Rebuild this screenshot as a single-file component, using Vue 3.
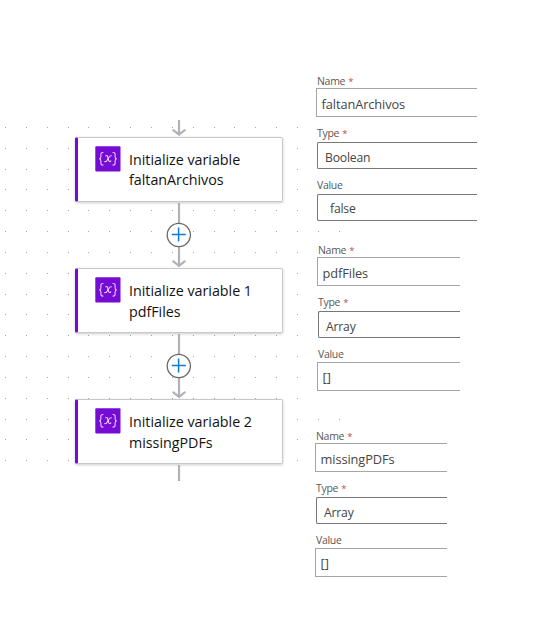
<script setup>
const steps = [
  { title: 'Initialize variable', name: 'faltanArchivos' },
  { title: 'Initialize variable 1', name: 'pdfFiles' },
  { title: 'Initialize variable 2', name: 'missingPDFs' },
]

const forms = [
  {
    id: 'first',
    fields: [
      { label: 'Name', required: true, value: 'faltanArchivos', kind: 'text' },
      { label: 'Type', required: true, value: 'Boolean', kind: 'select' },
      { label: 'Value', required: false, value: 'false', kind: 'select inset' },
    ],
  },
  {
    id: 'second',
    fields: [
      { label: 'Name', required: true, value: 'pdfFiles', kind: 'text' },
      { label: 'Type', required: true, value: 'Array', kind: 'select' },
      { label: 'Value', required: false, value: '[]', kind: 'text low' },
    ],
  },
  {
    id: 'third',
    fields: [
      { label: 'Name', required: true, value: 'missingPDFs', kind: 'text' },
      { label: 'Type', required: true, value: 'Array', kind: 'select' },
      { label: 'Value', required: false, value: '[]', kind: 'text low' },
    ],
  },
]

// Canvas grid dots, plus the few that show between the forms
const dots = []
for (let row = 0; row < 17; row++) {
  for (let col = 0; col < 15; col++) {
    dots.push({ x: Math.round(5 + col * 20.86), y: Math.round(127 + row * 20.83) })
  }
}
for (const y of [231, 419]) {
  dots.push({ x: 318, y }, { x: 339, y })
}
</script>

<template>
  <main class="page">
    <svg class="grid" width="556" height="627" aria-hidden="true">
      <rect v-for="(d, i) in dots" :key="i" :x="d.x" :y="d.y" width="1" height="1" />
    </svg>

    <section class="flow">
      <svg class="lead" width="16" height="17" viewBox="0 0 16 17">
        <path class="line" d="M8 0V14" />
        <path class="head" d="M2.3 10.2L8 14.6L13.7 10.2" />
      </svg>
      <template v-for="(s, i) in steps" :key="s.name">
        <article class="card">
          <svg class="icon" width="26" height="26" viewBox="0 0 26 26">
            <rect x=".3" y=".3" width="25.2" height="25.2" rx="1" fill="#770bd6" />
            <g fill="none" stroke="#e9d3fa" stroke-width="1.05" stroke-linecap="round">
              <path d="M8 6.4C6.2 6.4 5.9 7 5.9 8.3V10.7C5.9 12 5.5 12.7 4.2 12.8C5.5 12.9 5.9 13.6 5.9 14.9V17.2C5.9 18.6 6.2 19.1 8 19.1" />
              <path d="M18 6.4C19.8 6.4 20.1 7 20.1 8.3V10.7C20.1 12 20.5 12.7 21.8 12.8C20.5 12.9 20.1 13.6 20.1 14.9V17.2C20.1 18.6 19.8 19.1 18 19.1" />
              <path d="M10.7 9.8C12 9.1 12.4 9.9 12.7 11L13.7 14.5C14 15.8 14.8 16 15.8 14.9" />
              <path d="M16.3 9.8C15 9.2 14.3 10.5 13.2 12.4C12.1 14.4 11.1 16.3 9.7 15.5" />
            </g>
          </svg>
          <h2 class="title">{{ s.title }}<br />{{ s.name }}</h2>
        </article>
        <svg v-if="i < 2" class="link" width="26" height="67" viewBox="0 0 26 67">
          <path class="line" d="M13 1V63" />
          <path class="head" d="M7.3 59.4L13 63.8L18.7 59.4" />
          <circle cx="12.8" cy="33" r="11.6" fill="#fff" stroke="#696969" stroke-width="1.3" />
          <path d="M12.6 25.5V39.5M5.8 32.5H19.8" stroke="#0b7bd6" stroke-width="1.5" />
        </svg>
      </template>
      <svg class="tail" width="16" height="17" viewBox="0 0 16 17">
        <path class="line" d="M8 1V17" />
      </svg>
    </section>

    <section class="forms">
      <div v-for="f in forms" :key="f.id" class="form" :class="f.id">
        <div v-for="field in f.fields" :key="field.label" class="field">
          <div class="label">{{ field.label }}<span v-if="field.required" class="star">*</span></div>
          <div class="box" :class="field.kind">
            <span>{{ field.value }}</span>
          </div>
        </div>
      </div>
    </section>
  </main>
</template>

<style>
body {
  background: #fff;
}
</style>

<style scoped>
.page {
  position: relative;
  display: flex;
  width: 556px;
  height: 627px;
  overflow: hidden;
  background: #fff;
  font-family: "Open Sans", "Noto Sans", sans-serif;
}
.grid {
  position: absolute;
  inset: 0;
  fill: #a4a4a4;
}
.flow {
  position: relative;
  display: flex;
  flex-direction: column;
  align-items: center;
  width: 208px;
  margin-left: 75px;
  padding-top: 120px;
}
.flow > svg {
  display: block;
  flex: none;
}
.flow > .link {
  margin-bottom: -0.3px;
}
.line {
  stroke: #b3b0b8;
  stroke-width: 2.2;
}
.head {
  fill: none;
  stroke: #b3b0b8;
  stroke-width: 2.2;
  stroke-linecap: round;
}
.card {
  box-sizing: border-box;
  display: flex;
  flex: none;
  width: 208px;
  height: 64.5px;
  padding: 8px 0 0 17px;
  border: 1px solid #c8c8c8;
  border-left: 3px solid #770bd6;
  border-radius: 2px;
  background: #fff;
  box-shadow: 0 1px 3px rgba(0, 0, 0, 0.2);
}
.icon {
  flex: none;
}
.title {
  margin: 3.8px 0 0 8px;
  color: #141312;
  font-size: 14.3px;
  font-weight: 500;
  line-height: 20.5px;
  letter-spacing: -0.02px;
  white-space: nowrap;
}
.forms {
  position: relative;
  padding: 74px 0 0 32px;
}
.form {
  height: 156px;
}
.first {
  width: 161px;
  margin-left: 1px;
}
.second {
  width: 143px;
  margin: 13px 0 0 2px;
}
.third {
  width: 132px;
  margin-top: 30px;
}
.field {
  height: 52px;
}
.label {
  height: 14px;
  padding-left: 1px;
  color: #5a5856;
  font-size: 10.5px;
  line-height: 14px;
  letter-spacing: -0.3px;
}
.star {
  margin-left: 3px;
  color: #c0474b;
  font-size: 9.5px;
}
.box {
  box-sizing: border-box;
  display: flex;
  align-items: center;
  height: 29px;
  padding: 2px 0 0 4.6px;
  border: 1px solid #a5a5a5;
  border-right: 0;
  color: #464544;
  font-size: 12.8px;
  line-height: 18px;
  letter-spacing: -0.1px;
}
.low {
  margin-top: 1px;
  padding-top: 0;
}
.select {
  height: 27px;
  margin: 2px 0 0 1px;
  padding: 5px 0 0 7px;
  border-color: #777;
  border-radius: 2px 0 0 2px;
  font-size: 12.2px;
  letter-spacing: -0.2px;
}
.inset {
  padding: 3px 0 0 12px;
}
</style>
